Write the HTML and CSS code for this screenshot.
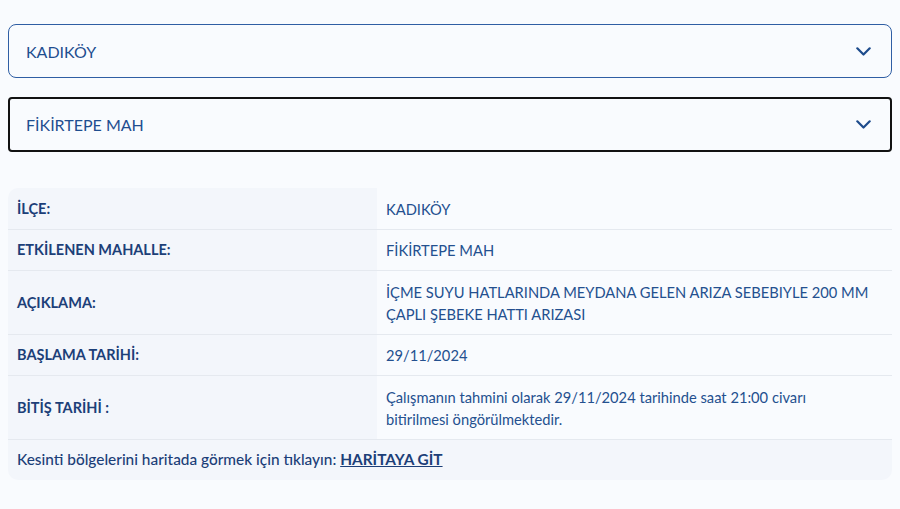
FILE: index.html
```html
<!DOCTYPE html>
<html lang="tr">
<head>
  <meta charset="UTF-8" />
  <meta name="viewport" content="width=device-width, initial-scale=1.0"/>
  <title>Arıza Kesintileri</title>
  <link rel="stylesheet" href="styles.css">
</head>
<body>
  <div class="filters">
    <div class="select select-district">
      <span>KADIKÖY</span>
      <svg class="chevron" width="15" height="9" viewBox="0 0 15 9"><path d="M1.3 1.3 L7.5 7.5 L13.7 1.3" fill="none" stroke="#1d4b8c" stroke-width="2.2" stroke-linecap="round" stroke-linejoin="round"/></svg>
    </div>
    <div class="select select-active">
      <span>FİKİRTEPE MAH</span>
      <svg class="chevron" width="15" height="9" viewBox="0 0 15 9"><path d="M1.3 1.3 L7.5 7.5 L13.7 1.3" fill="none" stroke="#1d4b8c" stroke-width="2.2" stroke-linecap="round" stroke-linejoin="round"/></svg>
    </div>
  </div>

  <table class="details">
    <tbody>
      <tr>
        <th>İLÇE:</th>
        <td>KADIKÖY</td>
      </tr>
      <tr>
        <th>ETKİLENEN MAHALLE:</th>
        <td>FİKİRTEPE MAH</td>
      </tr>
      <tr class="tall">
        <th>AÇIKLAMA:</th>
        <td>İÇME SUYU HATLARINDA MEYDANA GELEN ARIZA SEBEBIYLE 200 MM ÇAPLI ŞEBEKE HATTI ARIZASI</td>
      </tr>
      <tr>
        <th>BAŞLAMA TARİHİ:</th>
        <td>29/11/2024</td>
      </tr>
      <tr class="tall">
        <th>BİTİŞ TARİHİ :</th>
        <td>Çalışmanın tahmini olarak 29/11/2024 tarihinde saat 21:00 civarı bitirilmesi öngörülmektedir.</td>
      </tr>
      <tr class="map-row">
        <td colspan="2">Kesinti bölgelerini haritada görmek için tıklayın: <a href="#">HARİTAYA GİT</a></td>
      </tr>
    </tbody>
  </table>
</body>
</html>
```

FILE: styles.css
```css
body {
  margin: 0;
  padding: 24px 8px 8px;
  background-color: #f9fbfe;
  font-family: 'Lato', 'Noto Sans', sans-serif;
  color: #1f4a8a;
}

.filters {
  display: flex;
  flex-direction: column;
  gap: 19px;
}

.select {
  display: flex;
  align-items: center;
  justify-content: space-between;
  height: 54px;
  padding: 0 20px 0 17px;
  box-sizing: border-box;
  font-size: 16px;
  color: #1f4e90;
  background-color: #f9fbfe;
}

.select-district {
  border: 1px solid #2f5ea4;
  border-radius: 8px;
}

.select-active {
  height: 55px;
  border: 2px solid #121212;
  border-radius: 4px;
  padding-left: 16px;
  padding-right: 19px;
}

.chevron {
  display: block;
}

.details {
  width: 100%;
  margin-top: 36px;
  border-collapse: separate;
  border-spacing: 0;
  border-radius: 10px;
  overflow: hidden;
  font-size: 14.7px;
  line-height: 22px;
}

.details th,
.details td {
  padding: 9px 9px;
  border-bottom: 1px solid #e5e9ef;
  text-align: left;
  vertical-align: middle;
}

.details tr:first-child th,
.details tr:first-child td {
  padding-top: 10px;
}

.details tr.tall th,
.details tr.tall td {
  padding-top: 10px;
}

.details th {
  width: 351px;
  background-color: #f3f6fb;
  font-size: 14.5px;
  font-weight: 700;
  color: #1c3f78;
}

.details td {
  padding-right: 22px;
  background-color: #f9fbfe;
  font-weight: 400;
  color: #24508f;
}

.map-row td {
  background-color: #f3f6fb;
  border-bottom: none;
  padding: 9px 9px 10px;
  font-size: 15.4px;
  line-height: 21px;
  color: #1c3f78;
  font-weight: 500;
}

.map-row a {
  color: #1c3f78;
  font-weight: 700;
  text-decoration: underline;
}
```
